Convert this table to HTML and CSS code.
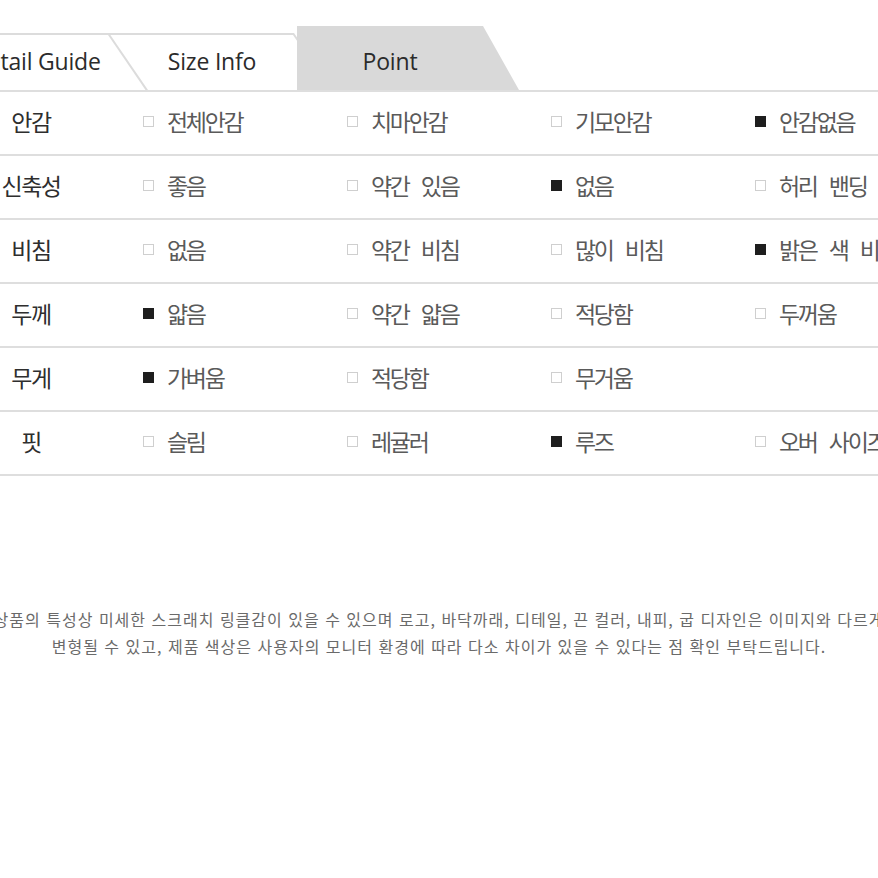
FILE: index.html
```html
<!DOCTYPE html>
<html lang="ko">
<head>
<meta charset="utf-8">
<title>Point</title>
<link rel="stylesheet" href="styles.css">
</head>
<body>
<div class="page">
  <div class="tabs">
    <div class="tab tab-detail"><span class="tab-label">Detail Guide</span></div>
    <div class="tab tab-size"><span class="tab-label">Size Info</span></div>
    <div class="tab tab-point"><span class="tab-label">Point</span></div>
  </div>

  <div class="table">
    <div class="row">
      <div class="label">안감</div>
      <div class="opt"><i class="box"></i><span>전체안감</span></div>
      <div class="opt"><i class="box"></i><span>치마안감</span></div>
      <div class="opt"><i class="box"></i><span>기모안감</span></div>
      <div class="opt"><i class="box on"></i><span>안감없음</span></div>
    </div>
    <div class="row">
      <div class="label">신축성</div>
      <div class="opt"><i class="box"></i><span>좋음</span></div>
      <div class="opt"><i class="box"></i><span>약간 있음</span></div>
      <div class="opt"><i class="box on"></i><span>없음</span></div>
      <div class="opt"><i class="box"></i><span>허리 밴딩</span></div>
    </div>
    <div class="row">
      <div class="label">비침</div>
      <div class="opt"><i class="box"></i><span>없음</span></div>
      <div class="opt"><i class="box"></i><span>약간 비침</span></div>
      <div class="opt"><i class="box"></i><span>많이 비침</span></div>
      <div class="opt"><i class="box on"></i><span>밝은 색 비침</span></div>
    </div>
    <div class="row">
      <div class="label">두께</div>
      <div class="opt"><i class="box on"></i><span>얇음</span></div>
      <div class="opt"><i class="box"></i><span>약간 얇음</span></div>
      <div class="opt"><i class="box"></i><span>적당함</span></div>
      <div class="opt"><i class="box"></i><span>두꺼움</span></div>
    </div>
    <div class="row">
      <div class="label">무게</div>
      <div class="opt"><i class="box on"></i><span>가벼움</span></div>
      <div class="opt"><i class="box"></i><span>적당함</span></div>
      <div class="opt"><i class="box"></i><span>무거움</span></div>
      <div class="opt"></div>
    </div>
    <div class="row">
      <div class="label">핏</div>
      <div class="opt"><i class="box"></i><span>슬림</span></div>
      <div class="opt"><i class="box"></i><span>레귤러</span></div>
      <div class="opt"><i class="box on"></i><span>루즈</span></div>
      <div class="opt"><i class="box"></i><span>오버 사이즈</span></div>
    </div>
  </div>

  <div class="notice">
    <p class="line">상품의 특성상 미세한 스크래치 링클감이 있을 수 있으며 로고, 바닥까래, 디테일, 끈 컬러, 내피, 굽 디자인은 이미지와 다르게</p>
    <p class="line">변형될 수 있고, 제품 색상은 사용자의 모니터 환경에 따라 다소 차이가 있을 수 있다는 점 확인 부탁드립니다.</p>
  </div>
</div>
</body>
</html>
```

FILE: styles.css
```css
html, body {
  margin: 0;
  padding: 0;
  background: #fff;
}
body {
  overflow: hidden;
  width: 878px;
  height: 878px;
  font-family: "Noto Sans CJK KR", "Noto Sans", sans-serif;
}
.page {
  width: 1034px;
  margin-left: calc(50% - 517px);
}

/* ---------- tabs ---------- */
.tabs {
  display: flex;
  align-items: flex-end;
  height: 64px;
  margin-top: 26px;
}
.tab {
  position: relative;
  display: flex;
  justify-content: center;
  align-items: flex-start;
  box-sizing: border-box;
  font-family: "Open Sans", "Noto Sans", sans-serif;
  font-size: 23px;
  letter-spacing: -0.2px;
  line-height: 30px;
  color: #2b2b2b;
}
.tab-label {
  position: relative;
  z-index: 1;
  white-space: nowrap;
}
.tab-detail,
.tab-size {
  height: 57px;
  padding-top: 13px;
  background: #dcdcdc;
  clip-path: polygon(0 0, calc(100% - 39px) 0, 100% 100%, 0 100%);
}
.tab-detail::before,
.tab-size::before {
  content: "";
  position: absolute;
  left: 0;
  right: 0;
  top: 2px;
  bottom: 0;
  background: #fff;
  clip-path: polygon(0 0, calc(100% - 40px) 0, calc(100% - 2.5px) 100%, 0 100%);
}
.tab-detail {
  width: 177px;
  margin-left: 49px;
  padding-right: 47px;
  z-index: 2;
}
.tab-size {
  width: 224px;
  margin-left: -39px;
  padding-right: 18px;
  z-index: 1;
}
.tab-point {
  width: 222px;
  height: 64px;
  margin-left: -36px;
  padding-top: 20px;
  padding-right: 36px;
  background: #d9d9d9;
  clip-path: polygon(0 0, calc(100% - 36px) 0, 100% 100%, 0 100%);
  z-index: 3;
}

/* ---------- table ---------- */
.table {
  border-top: 2px solid #dedede;
}
.row {
  display: grid;
  grid-template-columns: 218px repeat(4, 204px);
  height: 62px;
  align-items: center;
  border-bottom: 2px solid #dedede;
}
.label {
  text-align: center;
  font-size: 23px;
  letter-spacing: -1.5px;
  line-height: 30px;
  padding-bottom: 4px;
  color: #2e2e2e;
}
.opt {
  display: flex;
  align-items: center;
  gap: 13px;
  padding-left: 3px;
  padding-bottom: 4px;
  font-size: 23px;
  letter-spacing: -2.3px;
  word-spacing: 8px;
  line-height: 30px;
  color: #5a5a5a;
  white-space: nowrap;
}
.box {
  display: block;
  width: 11px;
  height: 11px;
  box-sizing: border-box;
  border: 1px solid #cfcfcf;
  background: #fff;
  flex: none;
}
.box.on {
  border-color: #1e1e1e;
  background: #1e1e1e;
}

/* ---------- notice ---------- */
.notice {
  margin-top: 130px;
  text-align: center;
  color: #6a6a6a;
  font-size: 16px;
  letter-spacing: 1px;
  line-height: 27px;
}
.line {
  margin: 0;
  white-space: nowrap;
}
```
